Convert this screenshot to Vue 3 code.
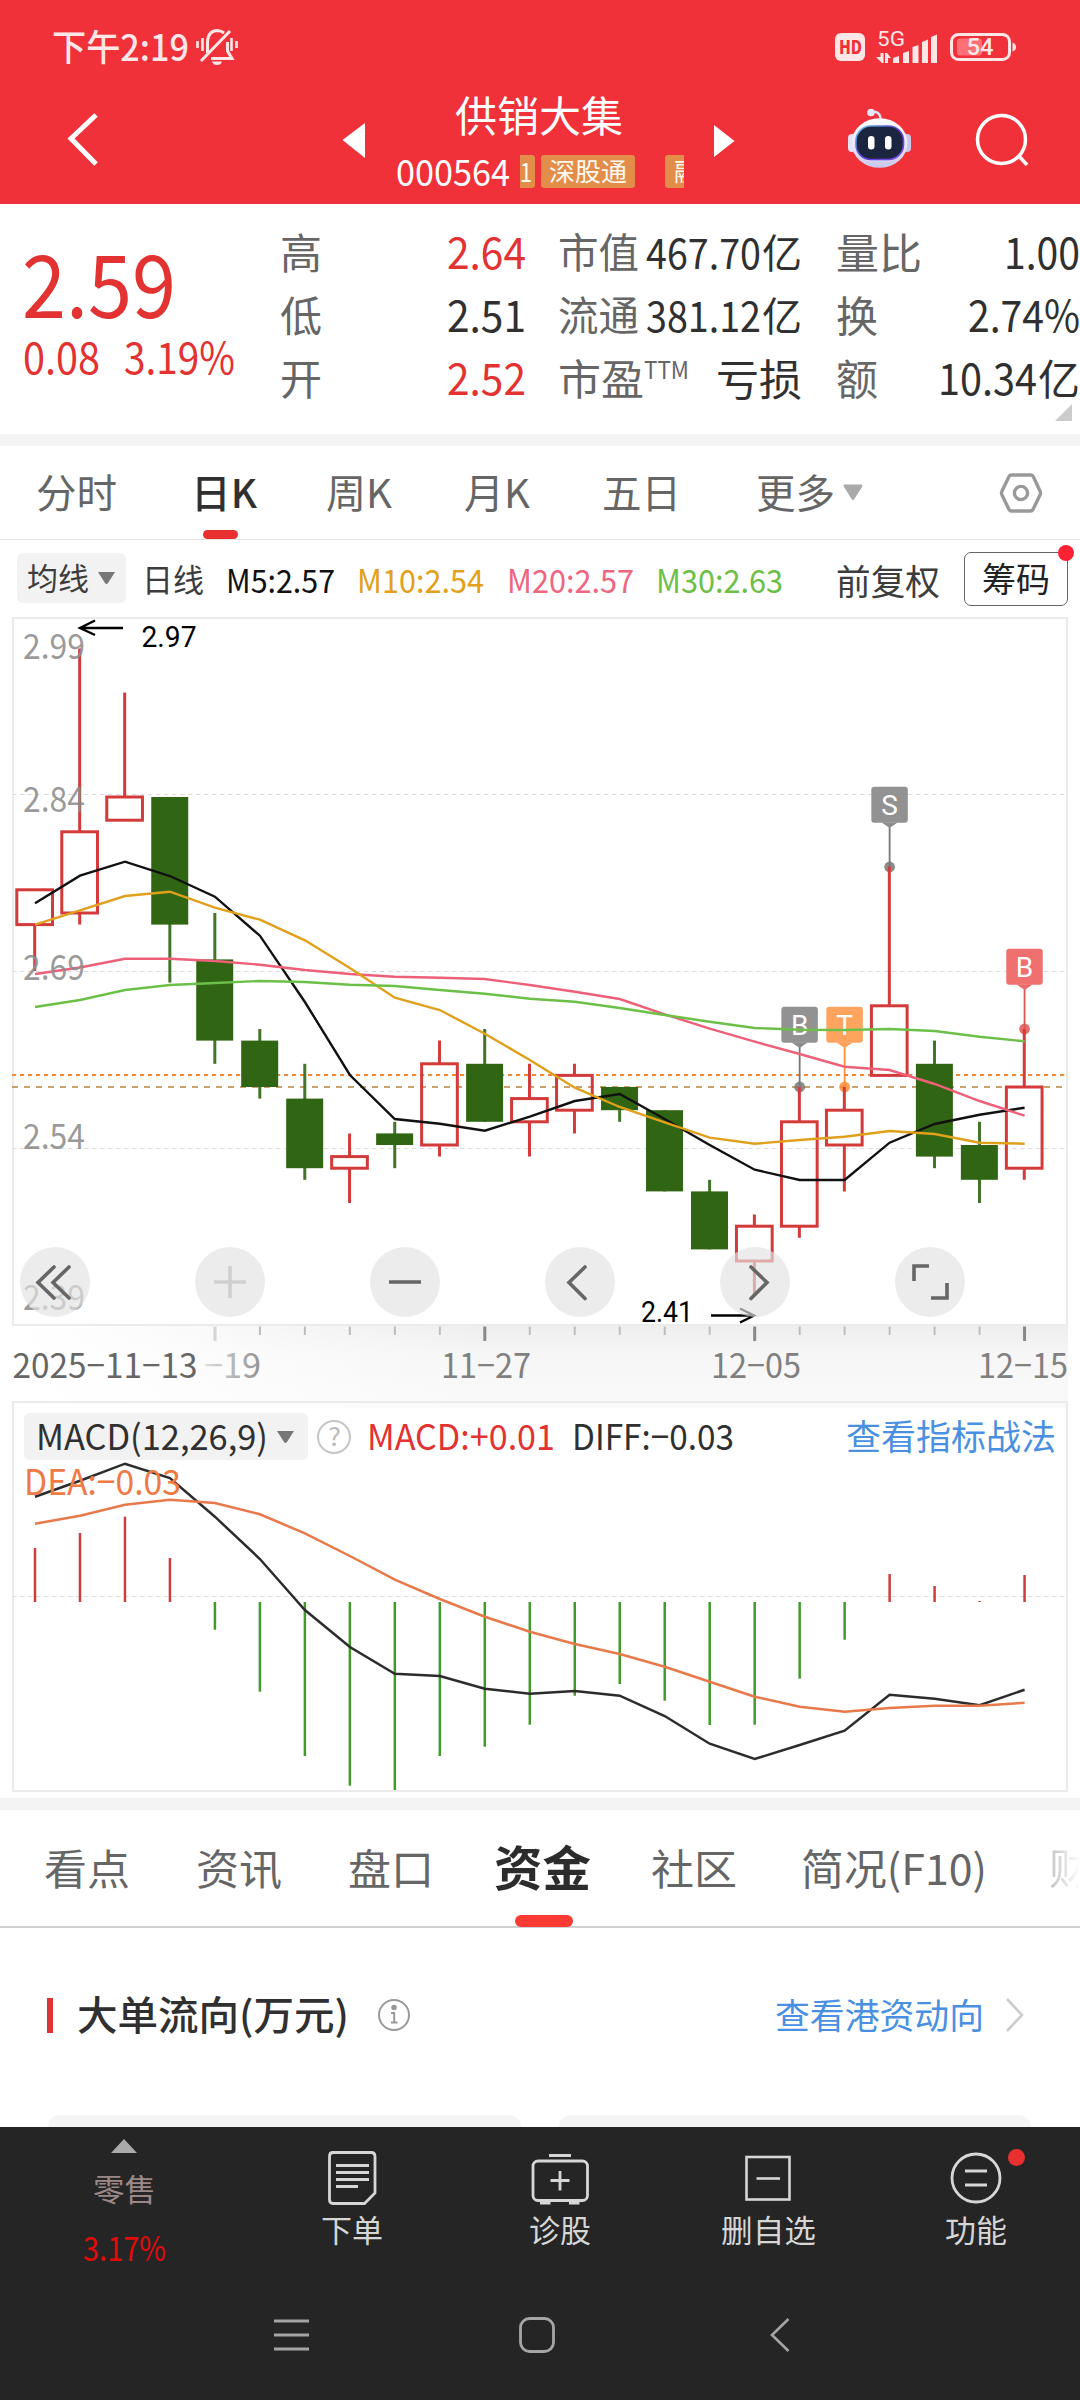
<script setup>
import { h } from 'vue'

const LATIN = "Roboto, 'Noto Sans CJK SC', sans-serif"
const HAN = "'Noto Sans CJK SC', sans-serif"

// Single line of text with a fixed advance width, vertically centred in its box.
const Fit = (props) =>
  h('svg', { width: props.w, height: props.s, class: 'fit', style: { overflow: 'visible', display: 'block', flex: 'none' } }, [
    h('text', {
      x: 0,
      y: props.s * (props.num ? 0.856 : 0.88),
      textLength: props.w,
      lengthAdjust: 'spacingAndGlyphs',
      fill: 'currentColor',
      'font-size': props.s,
      'font-weight': props.b || (props.num ? 500 : 400),
      'font-family': props.num ? LATIN : HAN
    }, props.t)
  ])
Fit.props = ['t', 'w', 's', 'b', 'num']

const xAt = (i) => 35 + i * 44.98
const yAt = (p) => 1087 - (p - 2.59) * 1160

// open, close, high, low
const days = [
  [2.73, 2.76, 2.76, 2.69], [2.74, 2.81, 2.968, 2.73], [2.82, 2.84, 2.93, 2.82],
  [2.84, 2.73, 2.84, 2.68], [2.70, 2.63, 2.74, 2.61], [2.63, 2.59, 2.64, 2.58],
  [2.58, 2.52, 2.61, 2.51], [2.52, 2.53, 2.55, 2.49], [2.55, 2.54, 2.56, 2.52],
  [2.54, 2.61, 2.63, 2.53], [2.61, 2.56, 2.64, 2.56], [2.56, 2.58, 2.61, 2.53],
  [2.57, 2.60, 2.61, 2.55], [2.59, 2.57, 2.59, 2.56], [2.57, 2.50, 2.57, 2.50],
  [2.50, 2.45, 2.51, 2.45], [2.44, 2.47, 2.48, 2.41], [2.47, 2.56, 2.59, 2.46],
  [2.54, 2.57, 2.59, 2.50], [2.60, 2.66, 2.78, 2.60], [2.61, 2.53, 2.63, 2.52],
  [2.54, 2.51, 2.56, 2.49], [2.52, 2.59, 2.64, 2.51]
]
const candles = days.map(([o, c, hi, lo], i) => ({
  x: xAt(i), up: c > o,
  top: yAt(Math.max(o, c)), bottom: yAt(Math.min(o, c)),
  high: yAt(hi), low: yAt(lo)
}))

const line = (ys) => ys.map((y, i) => `${xAt(i).toFixed(1)},${y}`).join(' ')
const averages = [
  { c: '#111', ys: [903.3, 875.7, 861.7, 876, 896.7, 935.7, 1002, 1075, 1119, 1123.7, 1130.7, 1116.7, 1101, 1094, 1119, 1145, 1169.7, 1180, 1180, 1142.7, 1124, 1114.7, 1107.7] },
  { c: '#ee6078', ys: [974, 967.5, 958.7, 958.7, 961, 964.7, 970, 974, 976.7, 977.7, 979, 985, 991.7, 999, 1014.3, 1028.7, 1041.7, 1054, 1066.7, 1070, 1084, 1101, 1115.7] },
  { c: '#e0a01c', ys: [924.7, 910.3, 896, 891.7, 907.7, 919.7, 940.3, 968, 997.7, 1010, 1033.7, 1060, 1087.7, 1107, 1122.3, 1137.7, 1143.7, 1140, 1136.7, 1131, 1134, 1142.7, 1143.7] },
  { c: '#6cc048', ys: [1007, 1000, 990, 985, 983, 981, 982, 984.7, 986, 990, 993.7, 998.7, 1001.7, 1008, 1015, 1021.7, 1028, 1029.7, 1030, 1029, 1031, 1036.7, 1041.3] }
].map((a) => ({ c: a.c, d: line(a.ys) }))

const markers = [
  { i: 19, y: 867, t: 'S', c: '#8c8c8c', l: '#777' },
  { i: 17, y: 1087, t: 'B', c: '#8c8c8c', l: '#777' },
  { i: 18, y: 1087, t: 'T', c: '#ff9f55', l: '#ff8e36' },
  { i: 22, y: 1029, t: 'B', c: '#ef6868', l: '#e05555' }
].map((m) => ({ ...m, x: xAt(m.i) }))

const priceLabels = [['2.99', 659], ['2.84', 812], ['2.69', 980], ['2.54', 1149], ['2.39', 1310]]
const minorTicks = Array.from({ length: 18 }, (_, k) => k + 5).filter((i) => i !== 10 && i !== 16 && i !== 22).map(xAt)
const majorTicks = [10, 16, 22].map(xAt)
const dates = [['11−27', 441], ['12−05', 711], ['12−15', 978]]
const controls = [55, 230, 405, 580, 755, 930]

const barEnds = [1548, 1533, 1516.7, 1558, 1629.7, 1691.7, 1756, 1785.7, 1790, 1756, 1746.7, 1724.7, 1695.7, 1684, 1700.7, 1725, 1724.7, 1678.7, 1639.7, 1574, 1586, 1601, 1575]
const bars = barEnds.map((y, i) => ({ x: xAt(i), y, c: y < 1602 ? '#cd3d3d' : '#419a2b' }))
const diff = line([1496.7, 1480.7, 1463.7, 1478, 1516.7, 1559, 1610, 1647, 1673.7, 1676, 1688.7, 1693.7, 1691, 1695.7, 1716, 1743.7, 1759, 1745, 1730.7, 1694.7, 1698.7, 1705.3, 1689.7])
const dea = line([1523.7, 1515.7, 1504.7, 1499.7, 1503, 1514.3, 1533.3, 1556, 1579.7, 1599, 1616.7, 1631.7, 1644, 1654, 1666.7, 1681.7, 1696.7, 1706.7, 1711.7, 1708, 1705.7, 1705.7, 1702.7])
</script>

<template>
  <div class="screen">
    <header class="top">
      <div class="status">
        <Fit t="下午2:19" :w="137" :s="36" b="500" />
        <svg class="bell" width="44" height="38" viewBox="195 29 44 38" fill="none" stroke="currentColor" stroke-width="3">
          <path d="M207.500 54V43Q208 32 217 31.500Q221 31.500 224 34M201 62L230 32M211 59.500H232L227.500 52V43" />
          <path d="M212 62.500H222Q221 66 217 66Q213 66 212 62.500Z" fill="currentColor" stroke="none" />
          <path d="M197.500 42V49M202.500 39V52M231.500 39V52M236.500 42V49" stroke-width="2.600" />
        </svg>
        <div class="hd"><Fit t="HD" :w="23" :s="18" b="900" num /></div>
        <svg width="62" height="36" viewBox="876 27 62 36" fill="currentColor">
          <text x="877" y="43.500" font-size="20.500" font-family="Roboto, sans-serif" textLength="28" lengthAdjust="spacingAndGlyphs">5G</text>
          <path d="M880.500 51H883.500V61H882L876 55H880.500ZM885 51H887L891 56H888V61H885Z" />
          <path d="M893 56L899 54V61H893ZM903 51L909 49V61H903ZM912.500 45L918.500 43V61H912.500ZM922 40L928 37.500V61H922ZM931 35L937 32.500V61H931Z" />
        </svg>
        <svg class="battery" width="68" height="28" viewBox="949 32.500 68 28">
          <rect x="957" y="38" width="25" height="17" rx="3" fill="#ff6f76" />
          <rect x="951.500" y="34" width="58" height="25" rx="7" fill="none" stroke="currentColor" stroke-width="3" />
          <path d="M1012.500 42Q1016 43 1016 46.500Q1016 50 1012.500 51Z" fill="currentColor" />
          <text x="966.500" y="54.500" font-size="23" fill="currentColor" font-family="Roboto, sans-serif" font-weight="500" textLength="27" lengthAdjust="spacingAndGlyphs">54</text>
        </svg>
      </div>
      <div class="titlebar">
        <svg width="32" height="56" viewBox="67 110 32 56"><path d="M96 115L71 138.500L96 164" fill="none" stroke="#fff" stroke-width="5" /></svg>
        <svg class="prev" width="24" height="36" viewBox="342 122 24 36"><path d="M342.500 140L365 123V158Z" fill="#fff" /></svg>
        <div class="name">
          <Fit t="供销大集" :w="168" :s="42.500" />
          <div class="code">
            <Fit t="000564" :w="114" :s="36" num />
            <div class="ticker">
              <span class="tag tag-a"><Fit t="1" :w="12" :s="27" /></span>
              <span class="tag tag-b"><Fit t="深股通" :w="78" :s="25" /></span>
              <span class="tag tag-c"><Fit t="融" :w="26" :s="25" /></span>
            </div>
          </div>
        </div>
        <svg class="next" width="22" height="34" viewBox="713 124 22 34"><path d="M714 125V157L734.500 141Z" fill="#fff" /></svg>
        <svg class="robot" width="66" height="64" viewBox="847 107 66 64">
          <defs>
            <linearGradient id="shell" x1="0" y1="0" x2="0" y2="1"><stop offset="0" stop-color="#fff" /><stop offset=".6" stop-color="#e6e4f8" /><stop offset="1" stop-color="#c9c6e8" /></linearGradient>
            <linearGradient id="rim" x1="0" y1="0" x2="1" y2="1"><stop offset="0" stop-color="#63c6dc" /><stop offset=".5" stop-color="#5a3ad0" /><stop offset="1" stop-color="#7b50f0" /></linearGradient>
          </defs>
          <path d="M870 112Q880 110 880.500 119" fill="none" stroke="#e4e1f4" stroke-width="2.500" />
          <circle cx="871" cy="112.500" r="3.800" fill="#e9e6f6" />
          <rect x="848" y="134" width="8" height="18" rx="4" fill="#e4e2f4" /><rect x="903" y="134" width="8" height="18" rx="4" fill="#cac8ea" />
          <ellipse cx="879.500" cy="143" rx="28" ry="24.800" fill="url(#shell)" />
          <rect x="856" y="126" width="47.500" height="33.500" rx="15" fill="#1b2540" stroke="url(#rim)" stroke-width="1.600" />
          <rect x="868" y="136" width="6.500" height="13.500" rx="3.200" fill="#fff" /><rect x="885" y="136" width="6.500" height="13.500" rx="3.200" fill="#fff" />
        </svg>
        <svg class="search" width="54" height="54" viewBox="975 112 54 54" fill="none" stroke="#fff" stroke-width="3.500"><circle cx="1001.500" cy="139.500" r="24" /><path d="M1018 155L1027 165" /></svg>
      </div>
    </header>

    <section class="quote">
      <div class="price">
        <Fit t="2.59" :w="154" :s="87" num />
        <div class="change"><Fit t="0.08" :w="77" :s="43" num /><Fit t="3.19%" :w="111" :s="43" num /></div>
      </div>
      <div class="stats c2">
        <div class="stat"><Fit t="高" :w="42" :s="42" /><Fit class="red" t="2.64" :w="79" :s="43.500" num /></div>
        <div class="stat"><Fit t="低" :w="42" :s="42" /><Fit class="dark" t="2.51" :w="79" :s="43.500" num /></div>
        <div class="stat"><Fit t="开" :w="42" :s="42" /><Fit class="red" t="2.52" :w="79" :s="43.500" num /></div>
      </div>
      <div class="stats c3">
        <div class="stat"><Fit t="市值" :w="81" :s="41" /><div class="val"><Fit t="467.70" :w="115" :s="42" num /><Fit t="亿" :w="40" :s="40" /></div></div>
        <div class="stat"><Fit t="流通" :w="81" :s="41" /><div class="val"><Fit t="381.12" :w="115" :s="42" num /><Fit t="亿" :w="40" :s="40" /></div></div>
        <div class="stat"><div class="ttm"><Fit t="市盈" :w="86" :s="42" /><Fit t="TTM" :w="45" :s="24" b="400" num /></div><Fit class="dark" t="亏损" :w="86" :s="43" /></div>
      </div>
      <div class="stats c4">
        <div class="stat"><Fit t="量比" :w="86" :s="42" /><Fit class="dark" t="1.00" :w="76" :s="43.500" num /></div>
        <div class="stat"><Fit t="换" :w="42" :s="42" /><Fit class="dark" t="2.74%" :w="112" :s="43.500" num /></div>
        <div class="stat"><Fit t="额" :w="42" :s="42" /><div class="val"><Fit t="10.34" :w="99" :s="43.500" num /><Fit t="亿" :w="42" :s="42" /></div></div>
        <svg class="corner" width="17" height="17"><path d="M17 0V17H0Z" fill="#ccc" /></svg>
      </div>
    </section>

    <nav class="periods">
      <Fit t="分时" :w="81" :s="39.500" />
      <div class="on"><Fit t="日K" :w="66" :s="40" b="500" /><i></i></div>
      <Fit t="周K" :w="66" :s="40" />
      <Fit t="月K" :w="66" :s="40" />
      <Fit t="五日" :w="79" :s="39.500" />
      <div class="more"><Fit t="更多" :w="79" :s="39.500" /><svg width="20" height="17"><path d="M1 .5H19Q20 1 19 3L11 15.500Q10 17 9 15.500L1 3Q0 1 1 .5Z" fill="#aaa" /></svg></div>
      <svg width="44" height="44" viewBox="1002 471 44 44" fill="none" stroke="#999" stroke-width="3.400"><path d="M1014 475H1034Q1035.500 475 1036.500 477L1043 491Q1044 493 1043 495L1036 509.500Q1035 511 1033.500 511H1014.500Q1013 511 1012 509.500L1005 495Q1004 493 1005 491L1012 476.500Q1013 475 1014 475Z" /><circle cx="1024" cy="493" r="6.600" /></svg>
    </nav>

    <div class="indicators">
      <div class="pill"><Fit t="均线" :w="62" :s="31" /><svg width="17" height="12"><path d="M0 0H17L10 11Q8.500 13 7 11Z" fill="#777" /></svg></div>
      <Fit t="日线" :w="62" :s="31.500" />
      <Fit class="ink" t="M5:2.57" :w="109" :s="32.500" num />
      <Fit class="gold" t="M10:2.54" :w="127" :s="32.500" num />
      <Fit class="pink" t="M20:2.57" :w="127" :s="32.500" num />
      <Fit class="lime" t="M30:2.63" :w="127" :s="32.500" num />
      <Fit t="前复权" :w="104" :s="35" />
      <div class="chips"><Fit t="筹码" :w="68" :s="34" /><i></i></div>
    </div>

    <svg class="chart" width="1080" height="796" viewBox="0 612 1080 796">
      <defs>
        <linearGradient id="axisV" x1="0" y1="0" x2="0" y2="1"><stop offset="0" stop-color="#eee" /><stop offset=".35" stop-color="#f6f6f6" /><stop offset="1" stop-color="#fafafa" /></linearGradient>
        <linearGradient id="axisH" x1="0" y1="0" x2="1" y2="0"><stop offset="0" stop-color="#fff" /><stop offset=".12" stop-color="#fff" stop-opacity=".8" /><stop offset=".45" stop-color="#fff" stop-opacity="0" /></linearGradient>
        <linearGradient id="fade" gradientUnits="userSpaceOnUse" x1="205" y1="0" x2="262" y2="0"><stop offset="0" stop-color="#ddd" /><stop offset="1" stop-color="#909090" /></linearGradient>
      </defs>
      <rect x="13" y="1326" width="1055" height="82" fill="url(#axisV)" />
      <rect x="13" y="1326" width="1055" height="82" fill="url(#axisH)" />
      <rect x="13" y="618" width="1054" height="707" fill="#fff" stroke="#ebebeb" stroke-width="2" />
      <path d="M12 794.500H1066M12 971.500H1066M12 1148.500H1066" stroke="#dcdcdc" stroke-width="1.200" stroke-dasharray="4.500 3.500" />
      <path d="M12 1075H1066" stroke="#e98a3e" stroke-width="2" stroke-dasharray="4.200 3.800" />
      <path d="M12 1087H1066" stroke="#c9a16c" stroke-width="2" stroke-dasharray="6 6" />

      <g v-for="m in markers" :key="m.i">
        <path :d="`M${m.x} ${m.y - 40}V${m.y}`" :stroke="m.l" stroke-width="1.800" />
        <circle :cx="m.x" :cy="m.y" r="5.400" :fill="m.l" fill-opacity=".85" />
        <rect :x="m.x - 18.300" :y="m.y - 80.300" width="36.500" height="36" rx="3" :fill="m.c" fill-opacity=".95" />
        <path :d="`M${m.x - 8} ${m.y - 44.500}h16l-8 5.500Z`" :fill="m.c" />
        <text :x="m.x" :y="m.y - 52.500" text-anchor="middle" font-size="28" font-family="Roboto, sans-serif" fill="#fff">{{ m.t }}</text>
      </g>

      <g v-for="c in candles" :key="c.x">
        <template v-if="c.up">
          <path :d="`M${c.x - .3} ${c.high}V${c.top}M${c.x - .3} ${c.bottom}V${c.low}`" stroke="#d33a3a" stroke-width="3" />
          <rect :x="c.x - 18.200" :y="c.top" width="35.700" :height="c.bottom - c.top" fill="none" stroke="#d33a3a" stroke-width="3" />
        </template>
        <template v-else>
          <path :d="`M${c.x - .1} ${c.high}V${c.low}`" stroke="#427529" stroke-width="3" />
          <rect :x="c.x - 18.700" :y="c.top" width="37" :height="c.bottom - c.top" fill="#306613" />
        </template>
      </g>
      <polyline v-for="a in averages" :key="a.c" :points="a.d" fill="none" :stroke="a.c" stroke-width="2.400" />

      <g class="digits" fill="#8c8c8c" fill-opacity=".88" font-size="35">
        <text v-for="p in priceLabels" :key="p[0]" x="23" :y="p[1]" textLength="62" lengthAdjust="spacingAndGlyphs">{{ p[0] }}</text>
      </g>
      <g fill="#000" font-size="30" font-family="Roboto, sans-serif">
        <text x="141.500" y="647" textLength="55" lengthAdjust="spacingAndGlyphs">2.97</text>
        <text x="641" y="1322" textLength="52" lengthAdjust="spacingAndGlyphs">2.41</text>
      </g>
      <path d="M123 628H80M95 620.500L80 628L95 635M711 1315.500H754M740 1308.500L754 1315.500L740 1322.500" fill="none" stroke="#000" stroke-width="2.400" />

      <circle v-for="x in controls" :key="x" :cx="x" cy="1282" r="35" fill="rgba(227,227,227,.67)" />
      <g fill="none" stroke="#666" stroke-width="3.600" stroke-linecap="round">
        <path d="M54 1267L38 1282.500L54 1298M69 1267L53 1282.500L69 1298M585 1267L569 1282.500L585 1298.500M751 1267L767 1282.500L751 1298.500" />
        <path d="M389 1282H421M914 1281V1266H929M931 1298H947V1283" stroke-linecap="butt" />
        <path d="M214 1282H246M230 1266V1298" stroke="#cfcfcf" stroke-linecap="butt" />
      </g>

      <path v-for="x in minorTicks" :key="x" :d="`M${x} 1326.500V1335`" stroke="#bdbdbd" stroke-width="2" />
      <path v-for="x in majorTicks" :key="x" :d="`M${x} 1326.500V1341`" stroke="#888" stroke-width="3" />
      <path d="M215 1326.500V1341" stroke="#d5d5d5" stroke-width="3" />
      <g class="digits" font-size="34.500" fill="#808080">
        <text x="12.500" y="1378" fill="#666" textLength="185" lengthAdjust="spacingAndGlyphs">2025−11−13</text>
        <text x="204" y="1378" fill="url(#fade)" textLength="57" lengthAdjust="spacingAndGlyphs">−19</text>
        <text v-for="d in dates" :key="d[0]" :x="d[1]" y="1378" textLength="90" lengthAdjust="spacingAndGlyphs">{{ d[0] }}</text>
      </g>
    </svg>

    <section class="macd">
      <svg class="macd-plot" width="1080" height="390" viewBox="0 1408 1080 390">
        <path d="M13 1402V1791H1067V1402" fill="none" stroke="#ebebeb" stroke-width="2" />
        <path d="M12 1402H1068" stroke="#ebebeb" stroke-width="2" />
        <path d="M12 1596.500H1066" stroke="#dcdcdc" stroke-width="1.200" stroke-dasharray="4.500 3.500" />
        <path v-for="b in bars" :key="b.x" :d="`M${b.x} 1602V${b.y}`" :stroke="b.c" stroke-width="2.500" />
        <polyline :points="diff" fill="none" stroke="#2c2c2c" stroke-width="2.500" />
        <polyline :points="dea" fill="none" stroke="#e8794a" stroke-width="2.500" />
      </svg>
      <div class="macd-head">
        <div class="pill wide"><Fit t="MACD(12,26,9)" :w="232" :s="35" b="400" num /><svg width="17" height="12"><path d="M0 0H17L10 11Q8.500 13 7 11Z" fill="#777" /></svg></div>
        <div class="help"><Fit t="?" :w="13" :s="25" b="400" num /></div>
        <Fit class="red" t="MACD:+0.01" :w="188" :s="35.500" b="400" num />
        <Fit class="dark" t="DIFF:−0.03" :w="162" :s="35.500" b="400" num />
        <Fit class="blue" t="查看指标战法" :w="210" :s="35" />
      </div>
      <div class="dea"><Fit t="DEA:−0.03" :w="157" :s="35.500" num b="400" /></div>
    </section>

    <nav class="topics">
      <Fit t="看点" :w="86" :s="42" />
      <Fit t="资讯" :w="86" :s="42" />
      <Fit t="盘口" :w="86" :s="42" />
      <div class="on"><Fit t="资金" :w="97" :s="48" b="700" /><i></i></div>
      <Fit t="社区" :w="86" :s="42" />
      <Fit t="简况(F10)" :w="186" :s="42" />
      <div class="cut"><Fit t="财务" :w="86" :s="42" /></div>
    </nav>

    <section class="flow">
      <div class="flow-head">
        <i class="mark"></i>
        <Fit class="dark" t="大单流向(万元)" :w="272" :s="39.500" b="500" />
        <svg class="info" width="34" height="34" viewBox="0 0 34 34" fill="none" stroke="#999" stroke-width="2"><circle cx="17" cy="17" r="15" /><circle cx="17" cy="9.500" r="1.800" fill="#999" /><path d="M14 15H17.200V24M14 24.500H20.500" /></svg>
        <Fit class="blue link" t="查看港资动向" :w="209" :s="35" />
        <svg class="go" width="20" height="36"><path d="M2 2L17 18L2 34" fill="none" stroke="#ccc" stroke-width="2.600" /></svg>
      </div>
      <div class="cards"><div></div><div></div></div>
    </section>

    <footer class="bottom">
      <div class="actions">
        <div class="index">
          <svg width="26" height="14"><path d="M13 0L26 14H0Z" fill="#aaa" /></svg>
          <Fit t="零售" :w="63" :s="31" />
          <Fit class="pct" t="3.17%" :w="83" :s="33.500" b="400" num />
        </div>
        <div class="act">
          <svg width="64" height="60" viewBox="320 2148 64 60" fill="none" stroke="currentColor" stroke-width="2.800"><path d="M333 2152.500H371Q375 2152.500 375 2156.500V2193L364.500 2203.500H333Q329.500 2203.500 329.500 2199.500V2156.500Q329.500 2152.500 333 2152.500Z" /><path d="M336 2165.500H369M336 2172.500H369M336 2179.500H369M336 2186.500H358" /></svg>
          <Fit t="下单" :w="62" :s="31" />
        </div>
        <div class="act">
          <svg width="64" height="60" viewBox="528 2148 64 60" fill="none" stroke="currentColor" stroke-width="2.800"><rect x="533" y="2161" width="54.500" height="39.500" rx="5" /><path d="M549 2155.500H571M550.500 2180.500H569.500M560 2171V2190.500M540 2203H550.500M569 2203H579.500" /></svg>
          <Fit t="诊股" :w="62" :s="31" />
        </div>
        <div class="act">
          <svg width="64" height="60" viewBox="736 2148 64 60" fill="none" stroke="currentColor" stroke-width="2.600"><rect x="746.500" y="2157" width="43" height="42.500" /><path d="M756.500 2178.500H780" /></svg>
          <Fit t="删自选" :w="95" :s="31" />
        </div>
        <div class="act">
          <svg width="64" height="60" viewBox="944 2148 64 60" fill="none" stroke="currentColor" stroke-width="2.800"><circle cx="976" cy="2178" r="24" /><path d="M965 2171H987M965 2185H987" /></svg>
          <Fit t="功能" :w="62" :s="31" />
          <i class="dot"></i>
        </div>
      </div>
      <div class="sysnav">
        <svg width="36" height="36"><path d="M1 4H36M1 18H36M1 32H36" stroke="#a5a5a5" stroke-width="3" /></svg>
        <svg width="36" height="36"><rect x="1.500" y="1.500" width="33" height="33" rx="9" fill="none" stroke="#a5a5a5" stroke-width="2.800" /></svg>
        <svg width="20" height="36"><path d="M18.500 2L2 18L18.500 34" fill="none" stroke="#a5a5a5" stroke-width="2.600" /></svg>
      </div>
    </footer>
  </div>
</template>

<style>
html, body { margin: 0; background: #fff; }
</style>

<style scoped>
.screen { width: 1080px; height: 2400px; display: flex; flex-direction: column; overflow: hidden; background: #fff; color: #666; font-family: 'Noto Sans CJK SC', sans-serif; }
.screen > * { flex: none; box-sizing: border-box; }
svg { display: block; flex: none; }
.red { color: #e33232; }
.dark { color: #303030; }
.blue { color: #4a90e2; }

.top { height: 204px; background: #f13139; color: #fff; }
.status { height: 84px; padding: 10px 63px 0 52px; box-sizing: border-box; display: flex; align-items: center; color: #ffe6e7; }
.bell { margin-left: 6px; }
.hd { width: 30px; height: 28px; margin: 0 11px 0 596px; border-radius: 6px; background: #ffe6e7; color: #f13139; display: flex; align-items: center; justify-content: center; }
.battery { margin-left: 11px; }
.titlebar { height: 120px; display: flex; align-items: flex-start; padding-left: 67px; }
.titlebar > svg:first-child { margin-top: 26px; }
.prev { margin: 38px 0 0 243px; }
.name { width: 289px; margin: 11px 0 0 30px; display: flex; flex-direction: column; align-items: flex-start; }
.name > svg { margin-left: 59px; }
.code { display: flex; align-items: center; margin-top: 17px; height: 34px; }
.ticker { width: 164px; height: 33px; margin-left: 10px; display: flex; overflow: hidden; }
.tag { flex: none; height: 33px; background: #e38d4b; border-radius: 3px; display: flex; align-items: center; justify-content: center; color: #fffaf0; box-sizing: border-box; }
.tag-a { width: 15px; margin-right: 6px; border-radius: 0 3px 3px 0; justify-content: flex-start; }
.tag-b { width: 94px; margin-right: 30px; }
.tag-c { width: 44px; }
.next { margin: 40px 0 0 28px; }
.robot { margin: 23px 0 0 112px; }
.search { margin: 28px 0 0 62px; }

.quote { height: 242px; border-bottom: 12px solid #f4f4f4; display: flex; padding-left: 22px; }
.price { width: 258px; padding-top: 37px; color: #e33232; box-sizing: border-box; }
.change { display: flex; gap: 24px; margin-top: 8px; padding-left: 1px; }
.stats { display: flex; flex-direction: column; padding-top: 17px; position: relative; }
.stat { height: 63.3px; display: flex; align-items: center; justify-content: space-between; }
.c2 { width: 246px; }
.c3 { width: 244px; margin-left: 32px; }
.c4 { width: 244px; margin-left: 34px; }
.val { display: flex; align-items: center; gap: 1px; color: #303030; }
.ttm { display: flex; align-items: flex-start; }
.corner { position: absolute; left: 219px; top: 200px; }

.periods { height: 94px; border-bottom: 1px solid #e2e2e2; display: grid; grid-template-columns: 155px 135px 138px 138px 154px 243px 44px; padding-left: 36px; align-items: center; }
.periods .on { height: 93px; width: 66px; display: flex; align-items: center; justify-content: center; position: relative; color: #303030; }
.periods .on i { position: absolute; bottom: 0; left: 12px; width: 35px; height: 9px; border-radius: 5px; background: #e93030; }
.more { display: flex; align-items: center; gap: 8px; }

.indicators { height: 72px; display: grid; grid-template-columns: 125px 84px 131px 150px 149px 180px 128px 104px; padding: 6px 0 0 17px; align-items: start; color: #3c3c3c; }
.indicators > svg { margin-top: 18px; }
.indicators > svg:nth-of-type(6) { margin-top: 16px; }
.indicators > svg:nth-of-type(n + 2) { margin-top: 18px; }
.pill { height: 50px; width: 109px; margin-top: 7px; border-radius: 6px; background: #f2f2f2; display: flex; align-items: center; justify-content: space-between; padding: 0 11px 0 10px; box-sizing: border-box; }
.ink { color: #111; }
.gold { color: #e2a01b; }
.pink { color: #ee6680; }
.lime { color: #6cc048; }
.chips { width: 104px; height: 54px; margin-top: 6px; box-sizing: border-box; border: 1px solid #666; border-radius: 7px; display: flex; align-items: center; justify-content: center; position: relative; color: #222; }
.chips i { position: absolute; right: -7px; top: -8px; width: 16px; height: 16px; border-radius: 50%; background: #ff2233; }

.macd { height: 402px; border-bottom: 12px solid #f4f4f4; position: relative; }
.macd-plot { position: absolute; left: 0; top: 0; overflow: visible; }
.macd-head { position: relative; display: flex; align-items: center; height: 47px; padding: 5px 24px 0; }
.pill.wide { width: 284px; height: 47px; margin: 0; padding: 0 14px 0 12px; color: #303030; }
.help { width: 34px; height: 34px; margin: 0 16px 0 9px; box-sizing: border-box; border: 2px solid #c6c6c6; border-radius: 50%; color: #bbb; display: flex; align-items: center; justify-content: center; }
.macd-head .dark { margin-left: 17px; }
.macd-head .blue { margin-left: auto; }
.dea { position: relative; color: #f07a44; padding: 4px 0 0 24px; }

.topics { height: 118px; border-bottom: 2px solid #d0d0d0; display: grid; grid-template-columns: 152px 152px 146px 157px 150px 248px 34px; padding-left: 44px; align-items: center; }
.topics > svg { margin-bottom: -1px; }
.topics .on { height: 116px; position: relative; display: flex; align-items: center; color: #2c2c2c; }
.topics .on i { position: absolute; left: 21px; bottom: -1px; width: 58px; height: 12px; border-radius: 6px; background: #fb3b33; }
.cut { width: 30px; overflow: hidden; -webkit-mask-image: linear-gradient(90deg, rgba(0,0,0,.4), rgba(0,0,0,.02)); mask-image: linear-gradient(90deg, rgba(0,0,0,.4), rgba(0,0,0,.02)); }

.flow { height: 199px; display: flex; flex-direction: column; justify-content: space-between; }
.flow-head { display: flex; align-items: center; height: 36px; padding: 69px 55px 0 47px; }
.mark { width: 6px; height: 35px; background: #dc3535; margin-right: 24px; }
.info { margin-left: 28px; }
.link { margin-left: auto; }
.go { margin-left: 21px; }
.cards { display: flex; gap: 38px; padding: 0 49px 0 48px; height: 12px; }
.cards div { flex: 1; background: #f5f5f5; border-radius: 14px 14px 0 0; }

.bottom { height: 273px; background: #252525; color: #d6d6d6; display: flex; flex-direction: column; }
.actions { height: 160px; display: flex; }
.index { width: 248px; padding-top: 12px; display: flex; flex-direction: column; align-items: center; box-sizing: border-box; color: #9b8888; }
.index > svg:nth-child(2) { margin-top: 21px; }
.index .pct { margin-top: 27px; color: #e00b0b; }
.act { width: 208px; padding-top: 21px; display: flex; flex-direction: column; align-items: center; gap: 7px; box-sizing: border-box; position: relative; }
.dot { position: absolute; left: 136px; top: 22px; width: 17px; height: 17px; border-radius: 50%; background: #e83030; }
.sysnav { display: flex; align-items: center; padding: 30px 0 0 273px; }
.sysnav svg:nth-child(2) { margin-left: 210px; }
.sysnav svg:nth-child(3) { margin-left: 215px; }
</style>
